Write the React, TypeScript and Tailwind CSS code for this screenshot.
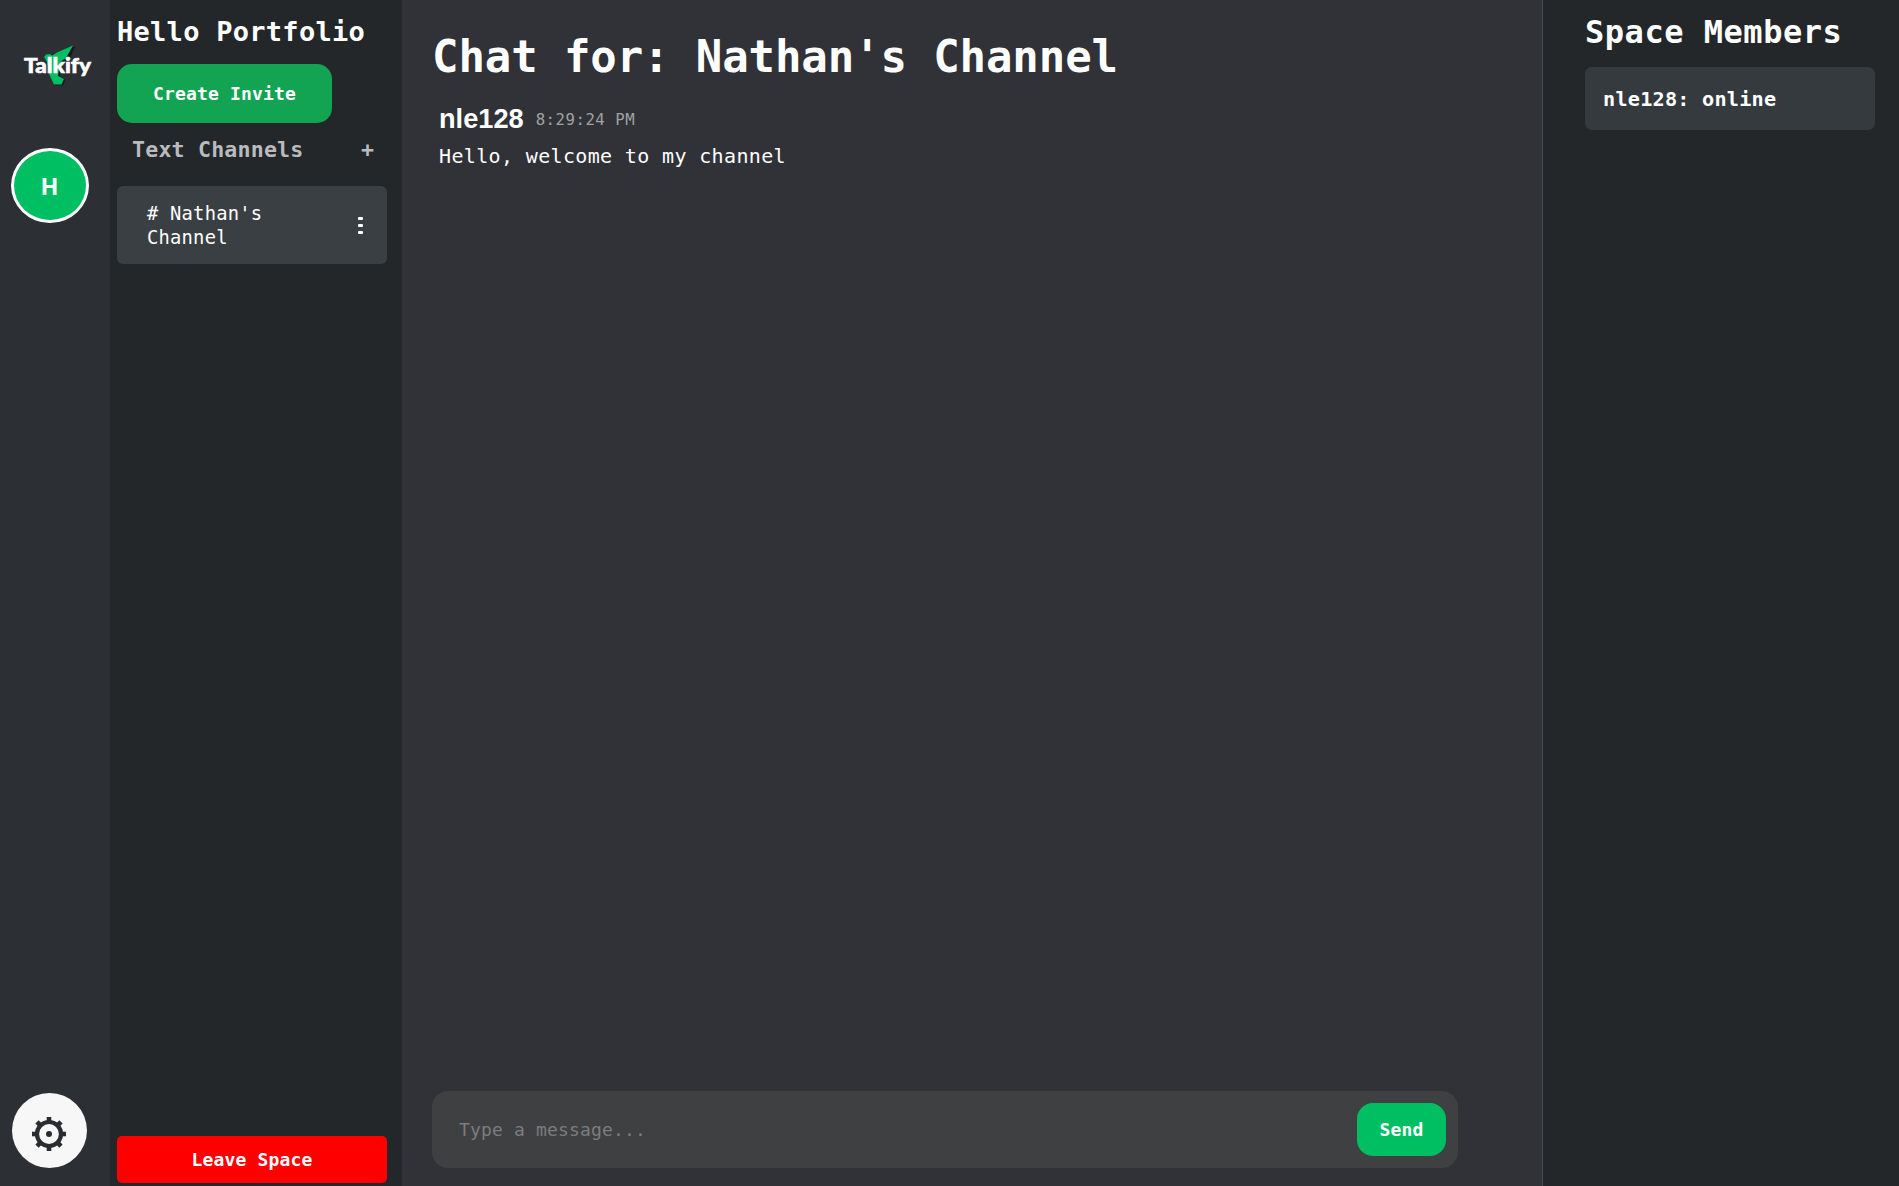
import React from "react";

const mono = "font-['Consolas','DejaVu_Sans_Mono',monospace]";

function Logo() {
  return (
    <svg width="84" height="54" viewBox="16 38 84 54" role="img" aria-label="Talkify">
      <path d="M46 56 L55 53.5 L75 46.5 L70 58 L61 63 L60 76 L65 80 L63 85.5 L55 85.5 L48 72 Z" fill="#15181a" />
      <path d="M44 57 L46 54.5 L50 54 L52 55.5 L57 52.5 L73 45.5 L66 58 L60 62 L58 76 L64 79 L61.5 84.5 L54 84.5 L49 74 L47 62 Z" fill="#00bf63" />
      <text x="24" y="73" textLength="67" lengthAdjust="spacingAndGlyphs" fill="#fff" stroke="#fff" strokeWidth="0.6" fontFamily="Lato" fontWeight="900" fontSize="21">
        Talkify
      </text>
    </svg>
  );
}

function Gear() {
  return (
    <svg width="36" height="36" viewBox="-18 -18 36 36" fill="#2a2c2f">
      {[0, 45, 90, 135, 180, 225, 270, 315].map((a) => (
        <rect key={a} x="-2.3" y="-17" width="4.6" height="6" transform={`rotate(${a})`} />
      ))}
      <circle r="12" fill="none" stroke="#2a2c2f" strokeWidth="4.2" />
      <circle r="3" />
    </svg>
  );
}

function SpaceRail() {
  return (
    <nav className="flex w-[110px] shrink-0 flex-col bg-[#2c2f33]">
      <div className="mt-[38px] ml-4 h-[54px]">
        <Logo />
      </div>
      <button className="mt-14 ml-[11px] flex h-[75px] w-[78px] items-center justify-center rounded-[50%] border-[3px] border-white bg-[#00bf63] pt-[3px] pr-px font-['Open_Sans',sans-serif] text-[23.5px] font-bold">
        H
      </button>
      <button className="mt-auto mb-[18px] ml-3 flex h-[75px] w-[75px] items-center justify-center rounded-full bg-[#f7f7f8] pt-[6px] pr-px">
        <Gear />
      </button>
    </nav>
  );
}

function ChannelSidebar() {
  return (
    <aside className="flex w-[292px] shrink-0 flex-col bg-[#23272a] pt-4 pr-[15px] pb-[3px] pl-[7px]">
      <h2 className="h-8 text-[27px] leading-8 font-bold tracking-[0.28px] whitespace-nowrap">Hello Portfolio</h2>
      <button className="mt-4 h-[59px] w-[215px] rounded-[15px] bg-[#13a453] text-[18px] font-bold tracking-[0.17px]">
        Create Invite
      </button>
      <div className="mt-[13px] flex h-7 items-center justify-between pr-[13px] pl-[15px] text-[21.6px] font-bold text-[#b9bbbe]">
        <h3 className="tracking-[0.19px]">Text Channels</h3>
        <span>+</span>
      </div>
      <div className="mt-[22px] flex h-[78px] items-center justify-between rounded-md bg-[#3a3f44] pr-6 pl-[30px]">
        <span className="w-[150px] pt-[2px] text-[18.8px] leading-6 tracking-[0.22px]"># Nathan's Channel</span>
        <span className="flex flex-col gap-1">
          <i className="h-[3px] w-[5px] rounded-[1px] bg-white" />
          <i className="h-[3px] w-[5px] rounded-[1px] bg-white" />
          <i className="h-[3px] w-[5px] rounded-[1px] bg-white" />
        </span>
      </div>
      <button className="mt-auto h-[47px] rounded-[5px] bg-[#ff0000] text-[18px] font-bold tracking-[0.17px]">
        Leave Space
      </button>
    </aside>
  );
}

function Chat() {
  return (
    <main className="flex min-w-0 flex-1 flex-col border-r border-[#46484b] bg-[#303237] pt-[29px] pr-[84px] pb-[18px] pl-[30px]">
      <h1 className="h-14 text-[44px] leading-14 font-bold tracking-[-0.11px] whitespace-nowrap">Chat for: Nathan's Channel</h1>
      <article className="mt-[18px] pl-[7px]">
        <header className="flex h-8 gap-3">
          <span className="font-['Liberation_Sans',sans-serif] text-[27.2px] leading-8 font-bold">nle128</span>
          <time className="text-[15.7px] leading-[34px] tracking-[0.5px] text-[#a0a2a5]">8:29:24 PM</time>
        </header>
        <p className="mt-[5px] text-[20px] leading-8 tracking-[0.35px]">Hello, welcome to my channel</p>
      </article>
      <form className="mt-auto flex h-[77px] items-center rounded-2xl bg-[#3f4042] pr-3 pl-[27px]">
        <input
          className="min-w-0 flex-1 bg-transparent text-[18px] tracking-[0.17px] outline-none placeholder:text-[#7b7c7e]"
          placeholder="Type a message..."
        />
        <button type="button" className="h-[53px] w-[89px] rounded-2xl bg-[#00bf63] text-[18px] font-bold tracking-[0.17px]">
          Send
        </button>
      </form>
    </main>
  );
}

function Members() {
  return (
    <aside className="w-[356px] shrink-0 bg-[#23272a] pt-3 pr-6 pl-[42px]">
      <h2 className="h-10 text-[32px] leading-10 font-bold tracking-[0.53px] whitespace-nowrap">Space Members</h2>
      <div className="mt-[15px] flex h-[63px] items-center rounded-[7px] bg-[#353a3f] pt-px pl-[18px] text-[20.2px] font-bold tracking-[0.23px]">
        nle128: online
      </div>
    </aside>
  );
}

export default function App() {
  return (
    <div className={`flex h-screen w-screen overflow-hidden text-white ${mono}`}>
      <SpaceRail />
      <ChannelSidebar />
      <Chat />
      <Members />
    </div>
  );
}
